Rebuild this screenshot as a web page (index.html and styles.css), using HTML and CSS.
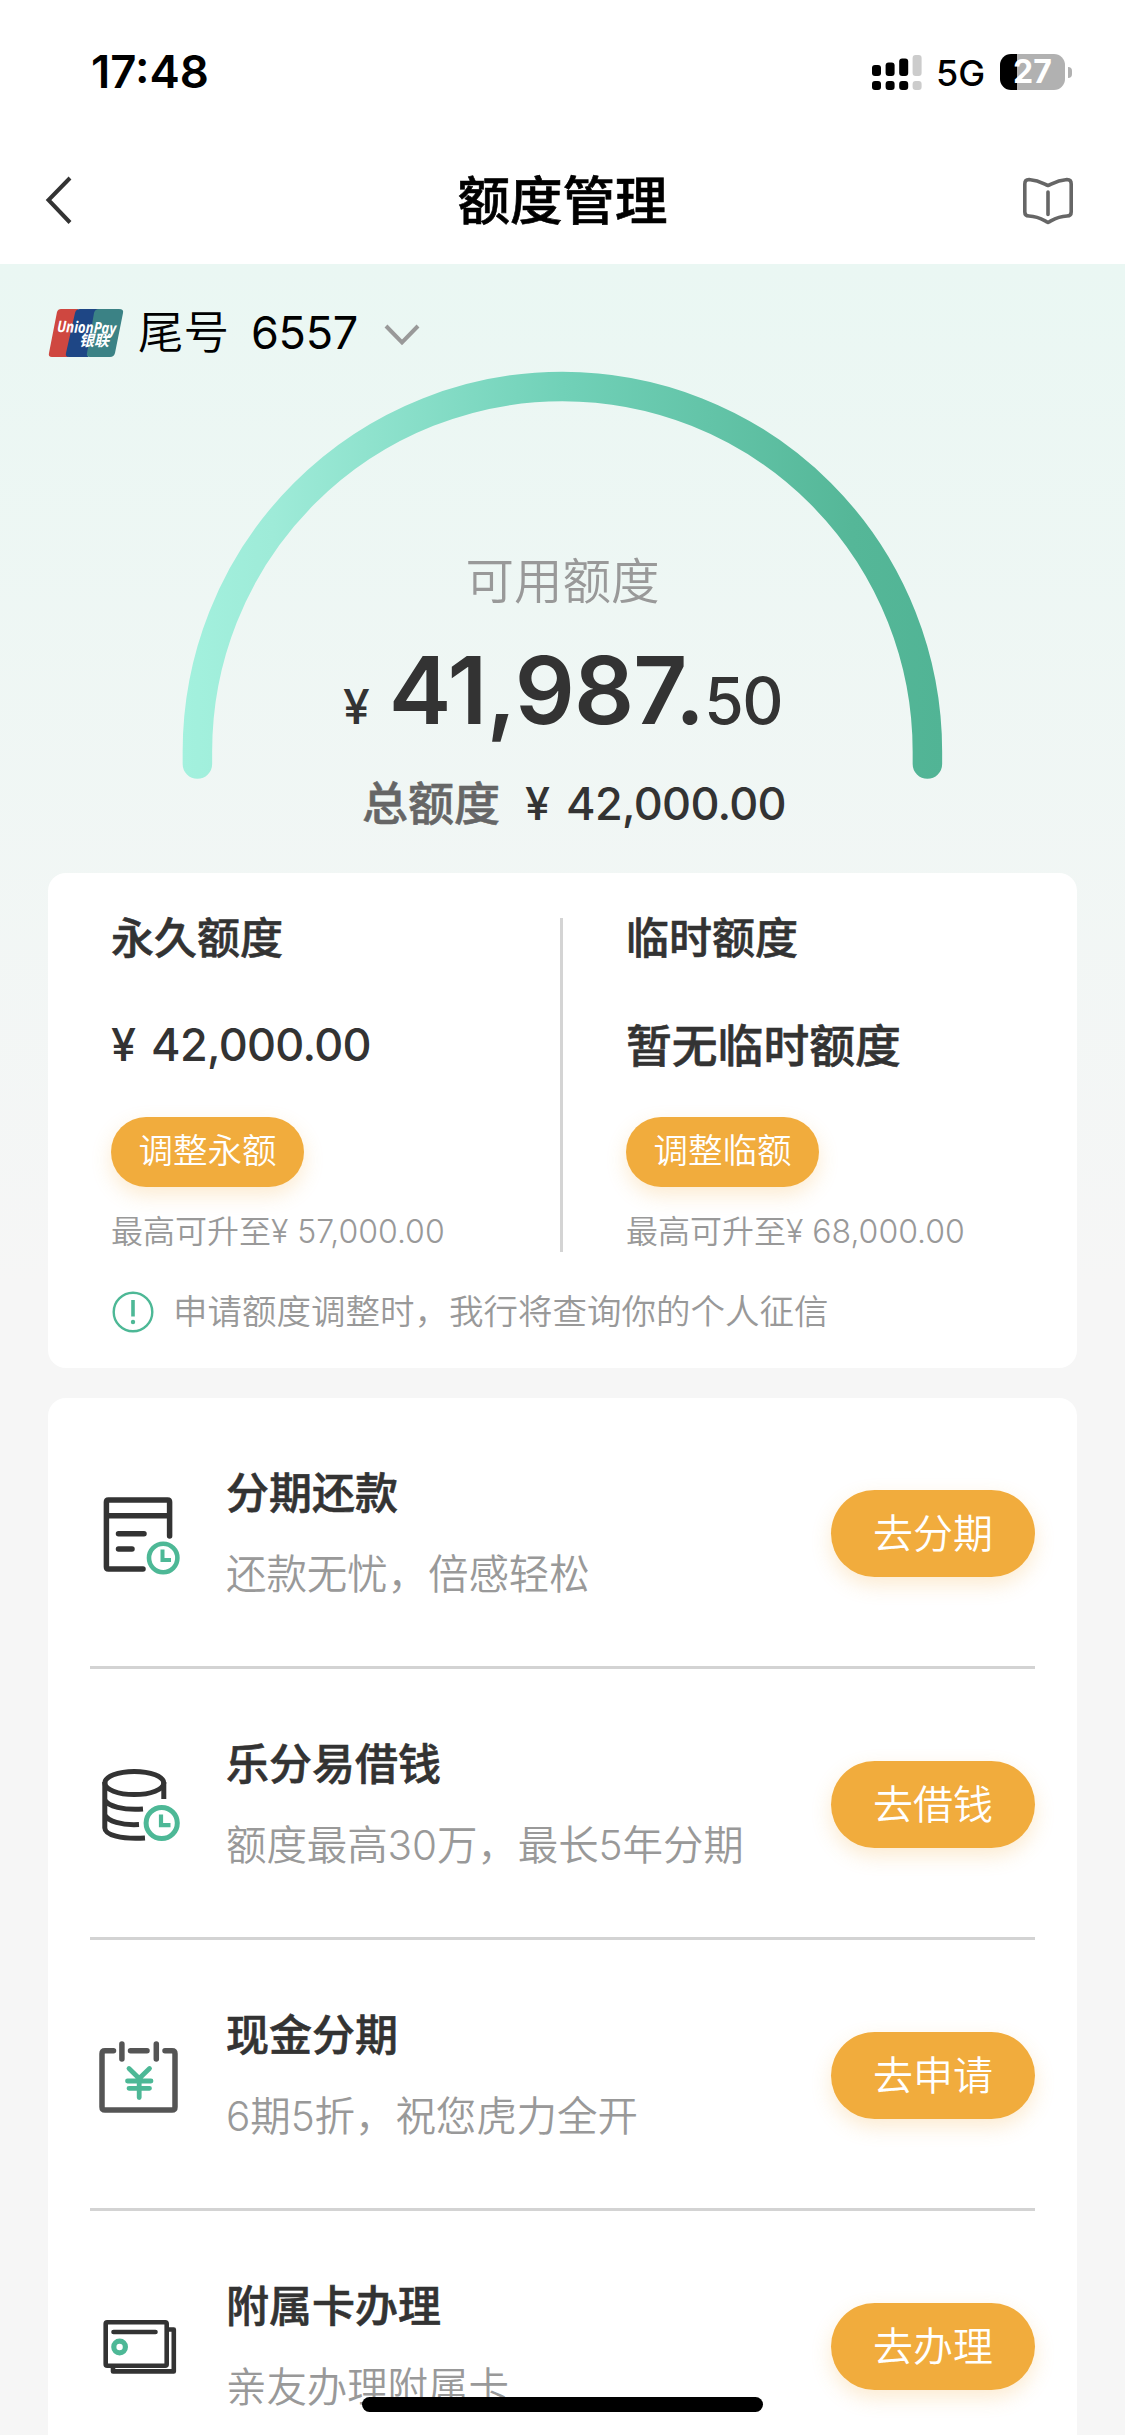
FILE: index.html
```html
<!DOCTYPE html>
<html lang="zh-CN">
<head>
<meta charset="utf-8">
<title>额度管理</title>
<link rel="stylesheet" href="styles.css">
</head>
<body>
<div class="screen">
  <header class="top">
    <div class="status">
      <span class="time">17:48</span>
      <div class="status-right">
        <svg class="signal" width="50" height="36" viewBox="0 0 50 36">
          <g fill="#000">
            <rect x="0" y="11" width="9" height="11" rx="3"/><rect x="13.6" y="8.5" width="9" height="13.5" rx="3"/><rect x="27.2" y="4.5" width="9" height="17.5" rx="3"/>
            <rect x="0" y="27" width="9" height="9" rx="3"/><rect x="13.6" y="27" width="9" height="9" rx="3"/><rect x="27.2" y="27" width="9" height="9" rx="3"/>
          </g>
          <g fill="#ccc"><rect x="40.6" y="1" width="9" height="21" rx="3"/><rect x="40.6" y="27" width="9" height="9" rx="3"/></g>
        </svg>
        <span class="network">5G</span>
        <div class="battery"><span class="battery-text">27</span></div>
        <span class="battery-cap"></span>
      </div>
    </div>
    <div class="nav">
      <svg width="60" height="60" viewBox="0 0 60 60" fill="none" stroke="#333" stroke-width="4"><path d="M38 8 16.500 30 38 52.500"/></svg>
      <h1 class="nav-title">额度管理</h1>
      <svg width="60" height="60" viewBox="0 0 60 60" fill="none" stroke="#666" stroke-width="3.600" stroke-linecap="round" stroke-linejoin="round"><path d="M31 15.500C35 14 39 10.500 50 9.500Q54.200 9.500 54.200 14V42Q54.200 46 50 46C40 46.500 36 50 31 52.500 26 50 22 46.500 12 46Q7.800 46 7.800 42V14Q7.800 9.500 12 9.500C23 10.500 27 14 31 15.500ZM31 22V44.500"/></svg>
    </div>
  </header>

  <main class="content">
    <section class="summary">
      <div class="card-pick">
        <svg class="unionpay" width="76" height="50" viewBox="0 0 76 50">
          <path fill="#cf4740" d="M13 1H30L20 49H4Q0 49 1 45L9 4Q10 1 13 1Z"/>
          <path fill="#1e4685" d="M32 1H52L40 49H21Q17 49 18 45L27 5Q28 1 32 1Z"/>
          <path fill="#3b8285" d="M51 1H71Q76 1 75 5L67 45Q66 49 62 49H42Q38 49 39 45L46 5Q47 1 51 1Z"/>
          <text x="9" y="25" class="up-en" textLength="59" lengthAdjust="spacingAndGlyphs" transform="rotate(2 36 24)">UnionPay</text>
          <text x="31" y="38" class="up-cn">银联</text>
        </svg>
        <span class="card-label">尾号</span>
        <span class="card-digits">6557</span>
        <svg class="caret" width="36" height="24" viewBox="0 0 36 24" fill="none" stroke="#999" stroke-width="4"><path d="M2 3 18 19.500 34 3"/></svg>
      </div>
      <div class="gauge">
        <svg class="gauge-arc" width="762" height="409" viewBox="0 0 762 409">
          <defs><linearGradient id="arc" gradientUnits="userSpaceOnUse" x1="0" x2="762" y1="0" y2="0"><stop offset="0" stop-color="#a3f1de"/><stop offset=".12" stop-color="#9eebd8"/><stop offset=".5" stop-color="#71d1b8"/><stop offset=".88" stop-color="#55b798"/><stop offset="1" stop-color="#51b495"/></linearGradient></defs>
          <path d="M15.400 392V379.500A365 365 0 0 1 745.400 379.500V392" fill="none" stroke="url(#arc)" stroke-width="29.500" stroke-linecap="round"/>
        </svg>
        <div class="gauge-text">
          <p class="avail-label">可用额度</p>
          <p class="avail"><span class="yen">¥</span><span class="whole">41,987.</span><span class="cents">50</span></p>
          <p class="total"><span class="total-label">总额度</span><span class="total-yen">¥</span><span class="total-num">42,000.00</span></p>
        </div>
      </div>
    </section>

    <section class="card limits">
      <div class="limit-cols">
        <div class="limit">
          <h2 class="limit-title">永久额度</h2>
          <p class="limit-value"><span class="limit-yen">¥</span><span class="total-num">42,000.00</span></p>
          <button class="btn btn-small">调整永额</button>
          <p class="limit-note">最高可升至¥ 57,000.00</p>
        </div>
        <div class="limit limit-temp">
          <h2 class="limit-title">临时额度</h2>
          <p class="limit-value limit-none">暂无临时额度</p>
          <button class="btn btn-small btn-temp">调整临额</button>
          <p class="limit-note">最高可升至¥ 68,000.00</p>
        </div>
      </div>
      <p class="notice">
        <svg width="42" height="42" viewBox="0 0 42 42" fill="none" stroke="#4db896" stroke-width="2.400"><circle cx="21" cy="21" r="19.300"/><path d="M21 9V25.500" stroke-width="3.600"/><circle cx="21" cy="31" r="2.200" fill="#4db896" stroke="none"/></svg>
        <span>申请额度调整时，我行将查询你的个人征信</span>
      </p>
    </section>

    <section class="card services">
      <div class="row">
        <svg class="row-icon" viewBox="0 0 90 90" fill="none" stroke="#333" stroke-width="5.500" stroke-linecap="round" stroke-linejoin="round">
          <path d="M74.600 47V13Q74.600 11 72.600 11H13.400Q11.400 11 11.400 13V78Q11.400 80 13.400 80H48M12 26.700H74M23.500 44.700H49M23.500 60H37"/>
          <g stroke="#4db896" stroke-width="4.600"><circle cx="68.200" cy="69" r="14.200"/><path stroke-width="4" stroke-linejoin="miter" stroke-linecap="butt" d="M67.500 60.500V71H76"/></g>
        </svg>
        <div class="row-text"><h3 class="row-title">分期还款</h3><p class="row-sub">还款无忧，倍感轻松</p></div>
        <button class="btn btn-go">去分期</button>
      </div>
      <div class="row">
        <svg class="row-icon" viewBox="0 0 90 90" fill="none" stroke="#333" stroke-width="5">
          <ellipse cx="39.300" cy="23" rx="29.500" ry="11.600"/>
          <path d="M9.800 22V68C10 75 26 79.500 50 78M68.800 22V39M9.800 40C13 46 28 50.500 48 49M9.800 55C13 61 26 65.500 44 64.500"/>
          <g stroke="#4db896"><circle cx="66.700" cy="63" r="15.600"/><path stroke-width="4.200" d="M66 54.500V65.200H75.500"/></g>
        </svg>
        <div class="row-text"><h3 class="row-title">乐分易借钱</h3><p class="row-sub">额度最高30万，最长5年分期</p></div>
        <button class="btn btn-go">去借钱</button>
      </div>
      <div class="row">
        <svg class="row-icon" viewBox="0 0 90 90" fill="none" stroke="#555" stroke-width="5.500" stroke-linecap="round" stroke-linejoin="round">
          <path d="M18.500 19.700H10Q7 19.700 7 22.700V76Q7 79 10 79H77Q80 79 80 76V22.700Q80 19.700 77 19.700H70M35.500 19.700H52M26.900 13V28M61.300 13V28"/>
          <path stroke="#4db896" stroke-width="4.800" d="M34 37.500 44.200 47.500 54.500 37.500M44.200 47.500V66.500M32.500 50H56M34 57.300H54.500"/>
        </svg>
        <div class="row-text"><h3 class="row-title">现金分期</h3><p class="row-sub">6期5折，祝您虎力全开</p></div>
        <button class="btn btn-go">去申请</button>
      </div>
      <div class="row">
        <svg class="row-icon" viewBox="0 0 90 90" fill="none" stroke="#333" stroke-width="4.600" stroke-linecap="round" stroke-linejoin="round">
          <rect x="10.700" y="20.300" width="61" height="43.500" rx="1.500"/>
          <path d="M74 27.500H78.800V69.400H18V66M18.500 30H60.500"/>
          <circle cx="24.600" cy="45" r="5.800" stroke="#4db896" stroke-width="5.200"/>
        </svg>
        <div class="row-text"><h3 class="row-title">附属卡办理</h3><p class="row-sub">亲友办理附属卡</p></div>
        <button class="btn btn-go">去办理</button>
      </div>
    </section>
  </main>
  <div class="home-indicator"></div>
</div>
</body>
</html>
```

FILE: styles.css
```css
* { box-sizing: border-box; margin: 0; padding: 0; }
body { background: #f6f6f6; font-family: Inter, "Noto Sans CJK SC", sans-serif; color: #333; }
.screen { position: relative; width: 1125px; height: 2435px; overflow: hidden; }
svg { display: block; flex: none; overflow: visible; }
h1, h2, h3 { font-weight: 500; -webkit-text-stroke: .6px currentColor; }

.top { height: 264px; background: #fff; }
.status { height: 144px; padding: 0 53px 0 91px; display: flex; align-items: center; justify-content: space-between; }
.time { font-size: 45.5px; font-weight: 600; color: #000; line-height: 60px; }
.status-right { display: flex; align-items: center; }
.network { margin-left: 14px; width: 64px; font-size: 36px; font-weight: 500; color: #000; line-height: 40px; padding-top: 2px; }
.battery { width: 65px; height: 36px; border-radius: 11px; background: linear-gradient(90deg, #000 17px, #b1b1b1 17px); display: flex; align-items: center; justify-content: center; }
.battery-text { font-size: 32px; font-weight: 700; line-height: 36px; color: #fff; }
.battery-cap { margin-left: 3px; width: 4px; height: 11px; border-radius: 0 6px 6px 0; background: #b1b1b1; }
.nav { height: 112px; padding: 0 48px 0 33px; display: flex; align-items: center; justify-content: space-between; }
.nav { padding: 0 49px 0 32px; }
.nav > svg:last-child { margin-right: -1px; }
.nav-title { font-size: 52.5px; line-height: 60px; color: #000; margin-left: 16px; padding-top: 2px; }

.content { background: linear-gradient(#eaf7f3 0, #f6f6f6 1020px); padding: 0 48px; }
.summary { height: 609px; padding-top: 44px; }
.card-pick { height: 50px; display: flex; align-items: center; color: #000; font-size: 45px; line-height: 50px; }
.up-en { font: italic 700 16px "Open Sans", sans-serif; fill: #fff; }
.up-cn { font: italic 700 15px "Noto Sans CJK SC", sans-serif; fill: #fff; }
.card-label { margin-left: 14px; font-size: 45.5px; font-weight: 350; }
.card-digits { margin-left: 22px; letter-spacing: -.3px; }
.caret { margin-left: 26px; margin-top: 3px; }
.gauge { display: grid; justify-items: center; margin-top: 14px; }
.gauge > * { grid-area: 1 / 1; }
.gauge-text { padding-top: 180px; display: flex; flex-direction: column; align-items: center; white-space: nowrap; }
.avail-label { font-size: 48.5px; font-weight: 350; line-height: 60px; color: #999; }
.avail { display: flex; align-items: baseline; line-height: 110px; margin-top: 23px; }
.yen { font-size: 48px; font-weight: 500; margin-right: 19px; }
.whole { font-size: 94px; font-weight: 600; letter-spacing: -.8px; }
.cents { font-size: 64px; font-weight: 500; letter-spacing: -1.5px; }
.total { display: flex; align-items: baseline; font-size: 45px; font-weight: 500; line-height: 60px; margin-top: 11px; margin-left: 23px; }
.total-label { font-size: 46px; color: #666; margin-right: 25px; -webkit-text-stroke: .6px currentColor; }
.total-yen { margin-right: 16px; }
.total-num { letter-spacing: -.7px; }

.card { background: #fff; border-radius: 18px; }
.limits { height: 495px; padding-top: 45px; }
.limit-cols { display: grid; grid-template-columns: 515px 514px; height: 330px; }
.limit { padding-left: 63px; white-space: nowrap; }
.limit:first-child { border-right: 3px solid #d4d4d4; }
.limit-title { font-size: 43px; line-height: 50px; margin-top: -5px; }
.limit-value { font-size: 45px; font-weight: 500; line-height: 60px; margin-top: 52px; }
.limit-none { font-size: 45.8px; -webkit-text-stroke: .6px currentColor; position: relative; top: 2px; }
.limit-yen { margin-right: 15px; }
.btn { display: block; border: 0; color: #fff; background: #f1ac3d; box-shadow: 0 8px 20px rgba(241, 172, 61, .24); font-family: inherit; font-weight: 350; text-align: center; white-space: nowrap; flex: none; }
.btn-small { width: 193px; height: 70px; border-radius: 35px; font-size: 34.5px; line-height: 65px; padding-bottom: 3px; margin-top: 42px; }
.limit-note { font-size: 32px; font-weight: 350; line-height: 40px; color: #999; margin-top: 25px; }
.notice { display: flex; align-items: center; gap: 19px; margin: 43px 0 0 64px; height: 42px; font-size: 34.5px; font-weight: 350; color: #999; line-height: 42px; }

.services { margin-top: 30px; padding: 0 42px; height: 1100px; }
.row { height: 271px; display: flex; align-items: center; border-bottom: 3px solid #d3d3d3; padding-top: 3px; }
.row:last-child { border-bottom: 0; padding-top: 0; }
.row-icon { width: 90px; height: 90px; margin-left: 5px; }
.row-text { margin-left: 41px; flex: 1; white-space: nowrap; }
.row-title { font-size: 43px; line-height: 50px; }
.row-sub { font-size: 40.5px; font-weight: 350; line-height: 50px; color: #999; margin-top: 32px; letter-spacing: -.1px; }
.btn-go { width: 204px; height: 87px; border-radius: 44px; font-size: 40px; line-height: 87px; }

.home-indicator { position: absolute; left: 362px; top: 2397px; width: 401px; height: 15px; border-radius: 8px; background: #000; }
```
